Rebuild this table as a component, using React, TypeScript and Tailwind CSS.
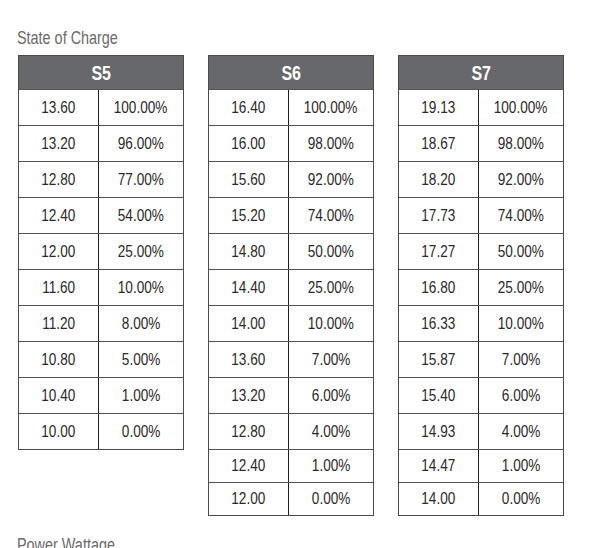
const tables = [
  {
    name: 'S5',
    rows: [
      ['13.60', '100.00%'],
      ['13.20', '96.00%'],
      ['12.80', '77.00%'],
      ['12.40', '54.00%'],
      ['12.00', '25.00%'],
      ['11.60', '10.00%'],
      ['11.20', '8.00%'],
      ['10.80', '5.00%'],
      ['10.40', '1.00%'],
      ['10.00', '0.00%'],
    ],
  },
  {
    name: 'S6',
    rows: [
      ['16.40', '100.00%'],
      ['16.00', '98.00%'],
      ['15.60', '92.00%'],
      ['15.20', '74.00%'],
      ['14.80', '50.00%'],
      ['14.40', '25.00%'],
      ['14.00', '10.00%'],
      ['13.60', '7.00%'],
      ['13.20', '6.00%'],
      ['12.80', '4.00%'],
      ['12.40', '1.00%'],
      ['12.00', '0.00%'],
    ],
  },
  {
    name: 'S7',
    rows: [
      ['19.13', '100.00%'],
      ['18.67', '98.00%'],
      ['18.20', '92.00%'],
      ['17.73', '74.00%'],
      ['17.27', '50.00%'],
      ['16.80', '25.00%'],
      ['16.33', '10.00%'],
      ['15.87', '7.00%'],
      ['15.40', '6.00%'],
      ['14.93', '4.00%'],
      ['14.47', '1.00%'],
      ['14.00', '0.00%'],
    ],
  },
]

// the source uses a condensed face; squeeze Liberation Sans to match
function Narrow({ children }: { children: React.ReactNode }) {
  return <span className="inline-block scale-x-[0.8]">{children}</span>
}

function ChargeTable({ name, rows }: { name: string; rows: string[][] }) {
  return (
    <div className="w-[166px] border border-[#4a4a4a] bg-white">
      <div className="flex h-[33px] items-center justify-center bg-[#67686b] text-[20px] font-bold text-white">
        <Narrow>{name}</Narrow>
      </div>
      {rows.map((r, i) => (
        <div
          key={i}
          className={`flex border-t border-[#555] text-[17px] text-[#2a2a2a] ${i < 10 ? 'h-[36px]' : 'h-[33px]'}`}
        >
          <div className="flex w-[80px] items-center justify-center border-r border-[#222]">
            <Narrow>{r[0]}</Narrow>
          </div>
          <div className="flex flex-1 items-center justify-center">
            <Narrow>{r[1]}</Narrow>
          </div>
        </div>
      ))}
    </div>
  )
}

export default function App() {
  return (
    <div
      className="h-[548px] w-[597px] overflow-hidden bg-white pl-[17px] pt-[28px]"
      style={{ fontFamily: '"Liberation Sans", Arial, sans-serif' }}
    >
      <h2 className="origin-left scale-x-[0.8] text-[18px] leading-[20px] text-[#6b6b6b]">
        State of Charge
      </h2>
      <div className="mt-[7px] flex items-start gap-[24px] pl-[1px]">
        {tables.map(t => (
          <ChargeTable key={t.name} name={t.name} rows={t.rows} />
        ))}
      </div>
      <h2 className="mt-[19px] origin-left scale-x-[0.8] text-[18px] leading-[20px] text-[#6b6b6b]">
        Power Wattage
      </h2>
    </div>
  )
}
